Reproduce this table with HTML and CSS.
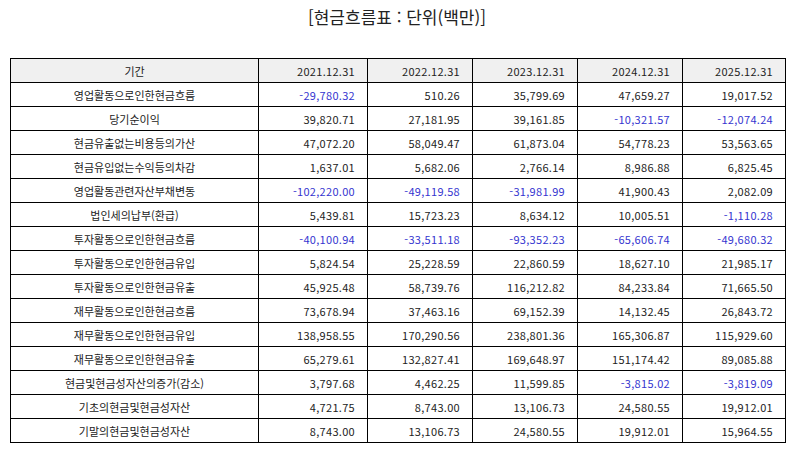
FILE: index.html
```html
<!DOCTYPE html>
<html lang="ko">
<head>
<meta charset="utf-8">
<link rel="stylesheet" href="styles.css">
</head>
<body>
<div class="page">
  <h1 class="title">[현금흐름표 : 단위(백만)]</h1>
  <table class="cf">
    <colgroup>
      <col class="c-label"><col class="c-y1"><col class="c-y"><col class="c-y"><col class="c-y"><col class="c-y5">
    </colgroup>
    <thead>
      <tr><th>기간</th><th>2021.12.31</th><th>2022.12.31</th><th>2023.12.31</th><th>2024.12.31</th><th>2025.12.31</th></tr>
    </thead>
    <tbody>
      <tr><td>영업활동으로인한현금흐름</td><td class="neg">-29,780.32</td><td>510.26</td><td>35,799.69</td><td>47,659.27</td><td>19,017.52</td></tr>
      <tr><td>당기순이익</td><td>39,820.71</td><td>27,181.95</td><td>39,161.85</td><td class="neg">-10,321.57</td><td class="neg">-12,074.24</td></tr>
      <tr><td>현금유출없는비용등의가산</td><td>47,072.20</td><td>58,049.47</td><td>61,873.04</td><td>54,778.23</td><td>53,563.65</td></tr>
      <tr><td>현금유입없는수익등의차감</td><td>1,637.01</td><td>5,682.06</td><td>2,766.14</td><td>8,986.88</td><td>6,825.45</td></tr>
      <tr><td>영업활동관련자산부채변동</td><td class="neg">-102,220.00</td><td class="neg">-49,119.58</td><td class="neg">-31,981.99</td><td>41,900.43</td><td>2,082.09</td></tr>
      <tr><td>법인세의납부(환급)</td><td>5,439.81</td><td>15,723.23</td><td>8,634.12</td><td>10,005.51</td><td class="neg">-1,110.28</td></tr>
      <tr><td>투자활동으로인한현금흐름</td><td class="neg">-40,100.94</td><td class="neg">-33,511.18</td><td class="neg">-93,352.23</td><td class="neg">-65,606.74</td><td class="neg">-49,680.32</td></tr>
      <tr><td>투자활동으로인한현금유입</td><td>5,824.54</td><td>25,228.59</td><td>22,860.59</td><td>18,627.10</td><td>21,985.17</td></tr>
      <tr><td>투자활동으로인한현금유출</td><td>45,925.48</td><td>58,739.76</td><td>116,212.82</td><td>84,233.84</td><td>71,665.50</td></tr>
      <tr><td>재무활동으로인한현금흐름</td><td>73,678.94</td><td>37,463.16</td><td>69,152.39</td><td>14,132.45</td><td>26,843.72</td></tr>
      <tr><td>재무활동으로인한현금유입</td><td>138,958.55</td><td>170,290.56</td><td>238,801.36</td><td>165,306.87</td><td>115,929.60</td></tr>
      <tr><td>재무활동으로인한현금유출</td><td>65,279.61</td><td>132,827.41</td><td>169,648.97</td><td>151,174.42</td><td>89,085.88</td></tr>
      <tr><td>현금및현금성자산의증가(감소)</td><td>3,797.68</td><td>4,462.25</td><td>11,599.85</td><td class="neg">-3,815.02</td><td class="neg">-3,819.09</td></tr>
      <tr><td>기초의현금및현금성자산</td><td>4,721.75</td><td>8,743.00</td><td>13,106.73</td><td>24,580.55</td><td>19,912.01</td></tr>
      <tr><td>기말의현금및현금성자산</td><td>8,743.00</td><td>13,106.73</td><td>24,580.55</td><td>19,912.01</td><td>15,964.55</td></tr>
    </tbody>
  </table>
</div>
</body>
</html>
```

FILE: styles.css
```css
html, body {
  margin: 0;
  padding: 0;
  background: #ffffff;
}
.page {
  width: 794px;
  font-family: "Noto Sans CJK KR", "Noto Sans", sans-serif;
  color: #222222;
}
.title {
  margin: 0;
  padding-top: 5px;
  height: 58px;
  box-sizing: border-box;
  text-align: center;
  font-size: 17px;
  font-weight: 400;
  line-height: 24px;
  color: #222222;
}
.cf {
  margin-left: 10px;
  width: 775px;
  border-collapse: collapse;
  table-layout: fixed;
  font-size: 11px;
}
.c-label { width: 248px; }
.c-y1 { width: 109px; }
.c-y { width: 105px; }
.c-y5 { width: 103px; }
.cf tr {
  height: 24px;
}
.cf th, .cf td {
  border: 1px solid #000000;
  padding: 0 12px 0 4px;
  line-height: 14px;
  text-align: right;
  font-weight: 400;
  white-space: nowrap;
  letter-spacing: 0.3px;
}
.cf th {
  background: #f0f0f0;
}
.cf th:first-child, .cf td:first-child {
  text-align: center;
  padding: 0 4px;
  letter-spacing: 0;
}
.cf td.neg {
  color: #3535d0;
}
```
